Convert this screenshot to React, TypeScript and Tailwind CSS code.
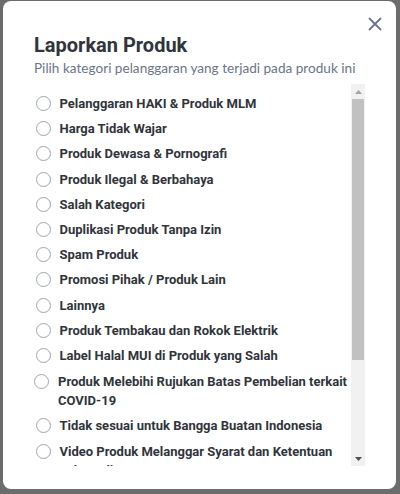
import React from "react";

const items: string[] = [
  "Pelanggaran HAKI & Produk MLM",
  "Harga Tidak Wajar",
  "Produk Dewasa & Pornografi",
  "Produk Ilegal & Berbahaya",
  "Salah Kategori",
  "Duplikasi Produk Tanpa Izin",
  "Spam Produk",
  "Promosi Pihak / Produk Lain",
  "Lainnya",
  "Produk Tembakau dan Rokok Elektrik",
  "Label Halal MUI di Produk yang Salah",
  "Produk Melebihi Rujukan Batas Pembelian terkait COVID-19",
  "Tidak sesuai untuk Bangga Buatan Indonesia",
  "Video Produk Melanggar Syarat dan Ketentuan Tokopedia",
];

export default function App() {
  return (
    <div
      className="h-[494px] w-[400px] bg-[#6b6c6e] pt-px pl-[3px] overflow-hidden"
      style={{ fontFamily: 'Roboto, "Open Sans", sans-serif' }}
    >
      <div className="relative h-[488px] w-[393px] rounded-[8px] bg-white">
        <button className="absolute right-[13px] top-[15px] flex h-[16px] w-[16px] items-center justify-center text-[#6d7588]">
          <svg width="14" height="14" viewBox="0 0 14 14" fill="none">
            <path d="M1.5 1.5L12.5 12.5M12.5 1.5L1.5 12.5" stroke="currentColor" strokeWidth="1.8" strokeLinecap="round" />
          </svg>
        </button>
        <div className="pl-[31px] pr-[31px] pt-[31px]">
          <h1 className="text-[20px] font-bold leading-[26px] text-[#31353b]">Laporkan Produk</h1>
          <p
            className="text-[13.6px] leading-[20px] text-[#6d7588] whitespace-nowrap"
            style={{ fontFamily: 'Lato, "Open Sans", sans-serif' }}
          >
            Pilih kategori pelanggaran yang terjadi pada produk ini
          </p>
          <div className="mt-[6px] flex h-[382px]">
            <div className="min-w-0 flex-1 overflow-hidden pt-[7px]">
              {items.map((t, i) => (
                <label
                  key={t}
                  className={`flex items-start gap-[9px] ${i === 11 ? "pt-[4.1px] pb-[3.1px]" : "py-[3.1px] pl-[1.5px]"}`}
                >
                  <span className="mt-[2px] h-[15px] w-[15px] shrink-0 rounded-full border-[1.5px] border-[#9fa6b0] bg-white" />
                  <span className="text-[13px] font-bold leading-[19px] text-[#31353b]">{t}</span>
                </label>
              ))}
            </div>
            <div className="flex w-[14px] shrink-0 flex-col bg-[#f1f1f1]">
              <div className="flex h-[15px] items-center justify-center">
                <svg width="7" height="4" viewBox="0 0 7 4">
                  <path d="M0 4L3.5 0L7 4Z" fill="#a3a3a3" />
                </svg>
              </div>
              <div className="mx-[1px] h-[261px] bg-[#c1c1c1]" />
              <div className="flex-1" />
              <div className="flex h-[15px] items-center justify-center">
                <svg width="7" height="4" viewBox="0 0 7 4">
                  <path d="M0 0L7 0L3.5 4Z" fill="#505050" />
                </svg>
              </div>
            </div>
          </div>
        </div>
      </div>
    </div>
  );
}
